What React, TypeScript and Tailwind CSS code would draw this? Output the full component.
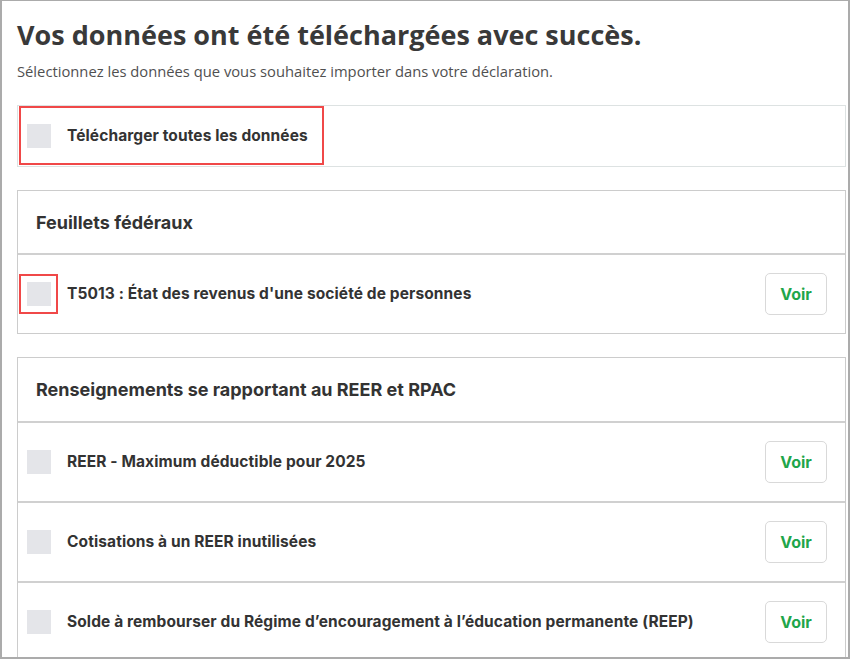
import React from "react";

const label = { fontFamily: "Inter, Roboto, 'Liberation Sans', sans-serif" } as React.CSSProperties;

function Checkbox() {
  return <div className="w-[24px] h-[24px] bg-[#e4e5e9] shrink-0" />;
}

function VoirButton() {
  return (
    <button
      className="w-[62px] h-[42px] border border-[#d9d9d9] rounded-[5px] bg-white text-[#1fa64b] font-bold text-[16px] shrink-0"
      style={label}
    >
      Voir
    </button>
  );
}

function Row({ text, highlight = false }: { text: string; highlight?: boolean }) {
  return (
    <div className="relative flex items-center h-[78px] pl-[9px] pr-[18px]">
      <Checkbox />
      {highlight && (
        <div className="absolute left-[1px] top-[19px] w-[39px] h-[40px] border-2 border-[#f04848]" />
      )}
      <div className="ml-[16px] flex-1 text-[15.5px] font-bold text-[#333333] tracking-[0.1px]" style={label}>
        {text}
      </div>
      <VoirButton />
    </div>
  );
}

function SectionHeader({ text, tall = false }: { text: string; tall?: boolean }) {
  return (
    <div
      className={`${tall ? "h-[63px]" : "h-[62px]"} flex items-center pl-[18px] text-[18px] font-bold text-[#333333]`}
      style={label}
    >
      {text}
    </div>
  );
}

export default function App() {
  return (
    <div className="w-[850px] h-[659px] overflow-hidden bg-white border-2 border-t border-[#ababab]">
      <div className="pl-[15px] w-[843px]">
        <h1
          className="mt-[17px] text-[27px] leading-[34px] font-bold text-[#393939]"
          style={{ fontFamily: "'Open Sans', sans-serif" }}
        >
          Vos données ont été téléchargées avec succès.
        </h1>
        <p
          className="mt-[9px] text-[14.75px] leading-[20px] text-[#505050]"
          style={{ fontFamily: "'Open Sans', sans-serif" }}
        >
          Sélectionnez les données que vous souhaitez importer dans votre déclaration.
        </p>

        <div className="relative mt-[24px] w-[829px] h-[62px] border border-[#dde2e2] flex items-center pl-[9px]">
          <Checkbox />
          <div className="ml-[16px] text-[15.5px] font-bold text-[#333333] tracking-[0.1px]" style={label}>
            Télécharger toutes les données
          </div>
          <div className="absolute left-[1px] top-0 w-[305px] h-[59px] border-2 border-[#f04848]" />
        </div>

        <div className="mt-[23px] w-[829px] border border-[#cccccc]">
          <SectionHeader text="Feuillets fédéraux" />
          <div className="h-[2px] bg-[#d0d0d0]" />
          <Row text="T5013 : État des revenus d'une société de personnes" highlight />
        </div>

        <div className="mt-[23px] w-[829px] border border-[#cccccc]">
          <SectionHeader text="Renseignements se rapportant au REER et RPAC" tall />
          <div className="h-[2px] bg-[#d0d0d0]" />
          <Row text="REER - Maximum déductible pour 2025" />
          <div className="h-[2px] bg-[#d0d0d0]" />
          <Row text="Cotisations à un REER inutilisées" />
          <div className="h-[2px] bg-[#d0d0d0]" />
          <Row text="Solde à rembourser du Régime d’encouragement à l’éducation permanente (REEP)" />
        </div>
      </div>
    </div>
  );
}
